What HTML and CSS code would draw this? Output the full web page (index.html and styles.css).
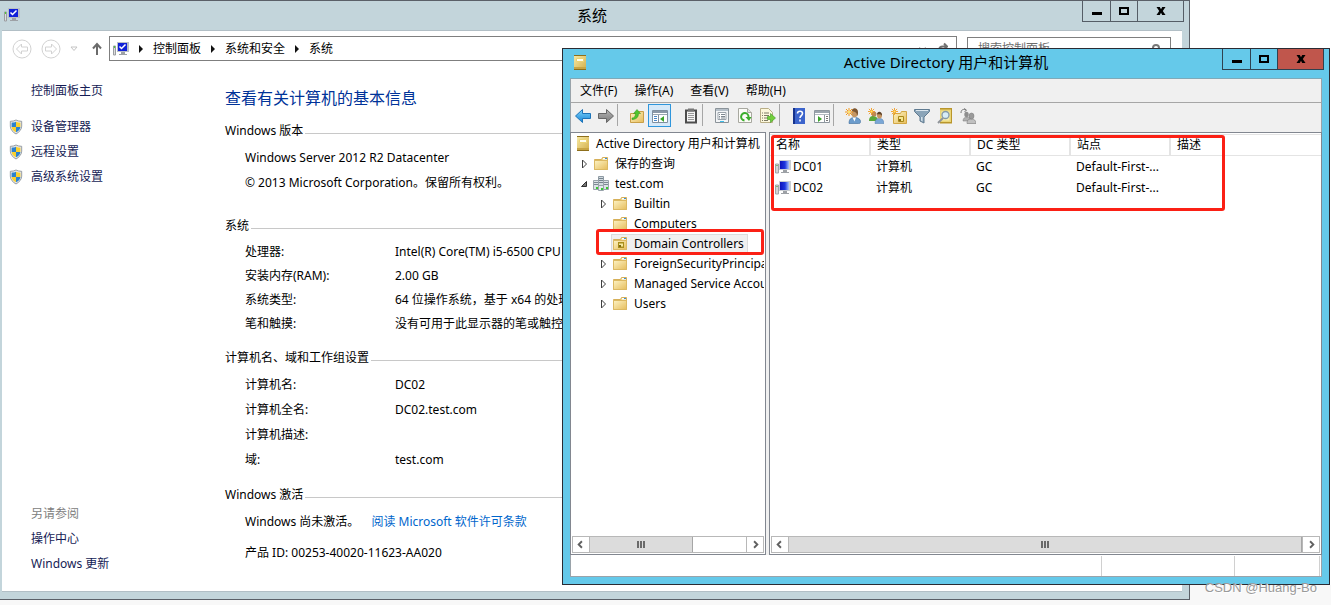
FILE: index.html
```
<!DOCTYPE html>
<html lang="zh-CN">
<head>
<meta charset="utf-8">
<title>Active Directory 用户和计算机</title>
<link rel="stylesheet" href="styles.css">
</head>
<body>
<svg class="defs" aria-hidden="true">
  <defs>
    <linearGradient id="gFolder" x1="0" y1="0" x2="1" y2="1"><stop offset="0" stop-color="#fdf3c4"/><stop offset="1" stop-color="#e6bd5c"/></linearGradient>
    <linearGradient id="gBook" x1="0" y1="0" x2="1" y2="1"><stop offset="0" stop-color="#f6e8a4"/><stop offset="1" stop-color="#d3ae48"/></linearGradient>
    <linearGradient id="gBlue" x1="0" y1="0" x2="0" y2="1"><stop offset="0" stop-color="#7fd4fb"/><stop offset="1" stop-color="#1584d6"/></linearGradient>
    <linearGradient id="gGrey" x1="0" y1="0" x2="0" y2="1"><stop offset="0" stop-color="#b5b5b5"/><stop offset="1" stop-color="#7a7a7a"/></linearGradient>
    <linearGradient id="gScreen" x1="0" y1="0" x2="1" y2="0"><stop offset="0" stop-color="#0c12b8"/><stop offset=".55" stop-color="#1c36e0"/><stop offset="1" stop-color="#a9c4fb"/></linearGradient>
    <symbol id="computer" viewBox="0 0 16 16">
      <path d="M4 1h12v10H4z" fill="#c9cdd2"/><path d="M5 2h9v8H5z" fill="url(#gScreen)"/>
      <path d="M8 11h4v2h2v1H6v-1h2z" fill="#9da1a6"/><path d="M0.500 5h3v9h-3z" fill="#d4d4d4" stroke="#a2a5aa" stroke-width="1"/><path d="M1 6h2v1H1z" fill="#7fbe70"/>
    </symbol>
    <symbol id="system" viewBox="0 0 16 16">
      <path d="M4 1h12v10H4z" fill="#b9bfc6"/><path d="M5 2h9v8H5z" fill="#1020d8"/><path d="M6.500 5.500l2 2 4-4" fill="none" stroke="#fff" stroke-width="1.500"/>
      <path d="M8 11h4v2h2v1H6v-1h2z" fill="#9da1a6"/><path d="M0.500 5h2v9h-2z" fill="#ddd" stroke="#9a9da1"/><path d="M1 5h1v2H1z" fill="#4cc83a"/>
    </symbol>
    <symbol id="shield" viewBox="0 0 16 18">
      <path d="M8 1c2 1 4 1.500 6.500 1.500V8c0 4-3 7-6.500 9C4.500 15 1.500 12 1.500 8V2.500C4 2.500 6 2 8 1z" fill="#e4e6e8" stroke="#8c9298"/>
      <path d="M8 3v6H3V4c2 0 3.500-.3 5-1z" fill="#2a82cf"/><path d="M8 3v6h5V4c-2 0-3.500-.3-5-1z" fill="#f9d02f"/>
      <path d="M3 9h5v6c-3-1.500-5-3.500-5-6z" fill="#f9d02f"/><path d="M13 9H8v6c3-1.500 5-3.500 5-6z" fill="#2a82cf"/>
    </symbol>
    <symbol id="folder" viewBox="0 0 16 16">
      <path d="M1.500 3.500h7l1-2h5v12h-13z" fill="#f2d98c" stroke="#d6b05a"/><path d="M10 2h4v1.500h-4z" fill="#fff"/><path d="M12 2h2v1h-2z" fill="#3b8fd9"/>
      <path d="M1.500 4.500h13v9h-13z" fill="url(#gFolder)" stroke="#dcb962"/>
    </symbol>
    <symbol id="oufolder" viewBox="0 0 16 16">
      <use href="#folder"/><path d="M6 6h6v6H6z" fill="#a98e1c"/><path d="M7 7.500h4v3H7z" fill="#f5e9a0"/><path d="M7 9h2v2H7z" fill="#7e6a10"/>
    </symbol>
    <symbol id="book" viewBox="0 0 16 16">
      <path d="M2 1h12v14H2z" fill="url(#gBook)"/><path d="M2 0h12v1H2zM2 14h12v1H2z" fill="#8e6f1c"/><path d="M2 12h12v2H2z" fill="#c8a545"/><path d="M4.500 3.500h7v3h-7z" fill="#fffef0" stroke="#ecd372"/>
    </symbol>
    <symbol id="domain" viewBox="0 0 16 16">
      <path d="M5.500 .5h5v9h-5z" fill="#d3dbe0" stroke="#8e9aa3"/><path d="M6 2.500h4M6 4.500h4M6 6.500h4" stroke="#75838d"/>
      <path d="M.5 4.500h5v9h-5z" fill="#dbe2e6" stroke="#98a3ab"/><path d="M10.500 4.500h5v9h-5z" fill="#dbe2e6" stroke="#98a3ab"/><path d="M1 6.500h4M1 8.500h4M11 6.500h4M11 8.500h4" stroke="#7c8993"/>
      <path d="M5.500 9.500h5v5h-5z" fill="#e2e8eb" stroke="#98a3ab"/><path d="M3 11h2v2H3zM8 12h2v2H8zM13 11h2v2h-2z" fill="#37c930"/>
    </symbol>
    <symbol id="closed" viewBox="0 0 16 16"><path d="M5.500 4l4 4-4 4z" fill="#fff" stroke="#404040"/></symbol>
    <symbol id="open" viewBox="0 0 16 16"><path d="M9.500 5.500v5h-5z" fill="#777" stroke="#303030"/></symbol>
    <symbol id="spark" viewBox="0 0 8 8"><path d="M4 0v8M0 4h8M1 1l6 6M7 1L1 7" stroke="#f29a1d"/><path d="M3 3h2v2H3z" fill="#ffe76a"/></symbol>
    <symbol id="left" viewBox="0 0 16 16"><path d="M9 4.500L5.500 8 9 11.500" fill="none" stroke="#606060" stroke-width="2"/></symbol>
    <symbol id="right" viewBox="0 0 16 16"><path d="M7 4.500L10.500 8 7 11.500" fill="none" stroke="#606060" stroke-width="2"/></symbol>
    <symbol id="crumb" viewBox="0 0 8 8"><path d="M2 0l4 4-4 4z" fill="#111"/></symbol>
    <symbol id="min" viewBox="0 0 12 12"><path d="M1 7h10v3H1z"/></symbol>
    <symbol id="max" viewBox="0 0 12 12"><path d="M1 2h10v8H1zM3 4v4h6V4z" fill-rule="evenodd"/></symbol>
    <symbol id="close" viewBox="0 0 12 12"><path d="M1.500 2h3.300L6 4.300 7.200 2h3.300L7.800 6l2.700 4H7.200L6 7.700 4.800 10H1.500l2.700-4z"/></symbol>
  </defs>
</svg>

<main class="desktop">
  <section class="window system" aria-label="系统">
    <header class="titlebar">
      <svg class="icon title-icon"><use href="#system"/></svg>
      <h1 class="title">系统</h1>
      <div class="caption">
        <button class="cap" aria-label="最小化"><svg><use href="#min"/></svg></button>
        <button class="cap cap-max" aria-label="最大化"><svg><use href="#max"/></svg></button>
        <button class="cap cap-close" aria-label="关闭"><svg><use href="#close"/></svg></button>
      </div>
    </header>
    <div class="client">
      <nav class="navbar">
        <button class="round" aria-label="后退"><svg viewBox="0 0 20 20"><circle cx="10" cy="10" r="9"/><path d="M4.500 10l5-5v3h6v4h-6v3z"/></svg></button>
        <button class="round" aria-label="前进"><svg viewBox="0 0 20 20"><circle cx="10" cy="10" r="9"/><path d="M15.500 10l-5-5v3h-6v4h6v3z"/></svg></button>
        <button class="history" aria-label="最近浏览的位置"><svg viewBox="0 0 8 6"><path d="M1 1h6L4 4.500z" fill="none" stroke="#c4c4c4"/></svg></button>
        <button class="up" aria-label="向上"><svg viewBox="0 0 12 14"><path d="M6 13V2M2 6.500L6 2l4 4.500" fill="none" stroke="#6b6b6b" stroke-width="2"/></svg></button>
        <div class="address">
          <svg class="icon"><use href="#system"/></svg>
          <svg class="crumb"><use href="#crumb"/></svg><a href="#">控制面板</a>
          <svg class="crumb"><use href="#crumb"/></svg><a href="#">系统和安全</a>
          <svg class="crumb"><use href="#crumb"/></svg><a href="#">系统</a>
          <svg class="address-tools" viewBox="0 0 32 16"><path d="M3 7l3.500 3.500L10 7M31 5.500h-4c-3 0-4 2-4 4 0 3 2 5 5 5M28 2.500l3 3-3 3" fill="none" stroke="#707070" stroke-width="2"/></svg>
        </div>
        <div class="search"><input type="search" placeholder="搜索控制面板" aria-label="搜索控制面板"><svg viewBox="0 0 12 12"><circle cx="6" cy="5" r="3" fill="none" stroke="#777" stroke-width="2"/><path d="M4 7l-3 4" stroke="#777" stroke-width="2"/></svg></div>
      </nav>
      <div class="body">
        <aside class="side">
          <a class="side-home" href="#">控制面板主页</a>
          <a class="side-link" href="#"><svg><use href="#shield"/></svg>设备管理器</a>
          <a class="side-link" href="#"><svg><use href="#shield"/></svg>远程设置</a>
          <a class="side-link" href="#"><svg><use href="#shield"/></svg>高级系统设置</a>
          <div class="see-also"><p>另请参阅</p><a href="#">操作中心</a><a href="#">Windows 更新</a></div>
        </aside>
        <article class="info">
          <h2 class="heading">查看有关计算机的基本信息</h2>
          <h3 class="legend edition">Windows 版本</h3>
          <p class="line">Windows Server 2012 R2 Datacenter</p>
          <p class="line">© 2013 Microsoft Corporation。保留所有权利。</p>
          <h3 class="legend after-edition">系统</h3>
          <dl class="facts compact">
            <dt>处理器:</dt><dd>Intel(R) Core(TM) i5-6500 CPU @ 3.20GHz</dd>
            <dt>安装内存(RAM):</dt><dd>2.00 GB</dd>
            <dt>系统类型:</dt><dd>64 位操作系统，基于 x64 的处理器</dd>
            <dt>笔和触摸:</dt><dd>没有可用于此显示器的笔或触控输入</dd>
          </dl>
          <h3 class="legend">计算机名、域和工作组设置</h3>
          <dl class="facts">
            <dt>计算机名:</dt><dd>DC02</dd>
            <dt>计算机全名:</dt><dd>DC02.test.com</dd>
            <dt>计算机描述:</dt><dd></dd>
            <dt>域:</dt><dd>test.com</dd>
          </dl>
          <h3 class="legend activation-legend">Windows 激活</h3>
          <p class="line activation">Windows 尚未激活。<a href="#">阅读 Microsoft 软件许可条款</a></p>
          <p class="line">产品 ID: 00253-40020-11623-AA020</p>
        </article>
      </div>
    </div>
  </section>

  <section class="window directory" aria-label="Active Directory 用户和计算机">
    <header class="titlebar">
      <svg class="icon title-icon"><use href="#book"/></svg>
      <h1 class="title">Active Directory 用户和计算机</h1>
      <div class="caption">
        <button class="cap" aria-label="最小化"><svg><use href="#min"/></svg></button>
        <button class="cap cap-max" aria-label="最大化"><svg><use href="#max"/></svg></button>
        <button class="cap cap-close" aria-label="关闭"><svg><use href="#close"/></svg></button>
      </div>
    </header>
    <div class="client">
      <nav class="menu"><button>文件(F)</button><button>操作(A)</button><button>查看(V)</button><button>帮助(H)</button></nav>
      <div class="toolbar" role="toolbar">
        <button aria-label="后退"><svg viewBox="0 0 16 16"><path d="M0.500 8l7-6.500v4h8v5h-8v4z" fill="url(#gBlue)" stroke="#1c73b8"/></svg></button>
        <button aria-label="前进"><svg viewBox="0 0 16 16"><path d="M15.500 8l-7-6.500v4h-8v5h8v4z" fill="url(#gGrey)" stroke="#666"/></svg></button>
        <i class="sep"></i>
        <button aria-label="上一级"><svg viewBox="0 0 16 16"><path d="M1.500 5.500h7l1-2h5v11h-13z" fill="url(#gFolder)" stroke="#c99f47"/><path d="M3 10c2.500 0 3.500-2 3.500-4.500H4.500L8 1.500l3.500 4h-2c0 3.500-2 6-6.500 6z" fill="#4fc52c" stroke="#2d8f1b" stroke-width=".5"/></svg></button>
        <button class="pressed" aria-label="显示控制台树"><svg viewBox="0 0 16 16"><path d="M.5 2.500h15v12H.5z" fill="#fff" stroke="#8090a0"/><path d="M1 3h14v2H1z" fill="#8a98a8"/><path d="M1 6h14v1H1z" fill="#9aa6b2"/><path d="M6.500 7v7" stroke="#8090a0"/><path d="M2 8.500h3M2 10.500h3M2 12.500h3" stroke="#4a87c8"/><path d="M12 8v6l-4-3z" fill="#3aa52a"/></svg></button>
        <button class="spaced" aria-label="复制"><svg viewBox="0 0 16 16"><path d="M3 2.500h10v12H3z" fill="#f5f5f5" stroke="#4d4d4d" stroke-width="2"/><path d="M5 .5h6v3H5z" fill="#777"/><path d="M5 5.500h6M5 7.500h6M5 9.500h6M5 11.500h6" stroke="#999"/></svg></button>
        <i class="sep"></i>
        <button aria-label="属性"><svg viewBox="0 0 16 16"><path d="M1.500.5h13v14h-13z" fill="#f3f5f7" stroke="#8b9399"/><path d="M2 1h12v2H2z" fill="#b6c0c9"/><path d="M4 4.500h8v7H4z" fill="#fff" stroke="#9aa3ab"/><path d="M5 6.500h1M7 6.500h4M5 8.500h1M7 8.500h4M5 10h1M7 10h4" stroke="#7d8790"/><path d="M6 13h4v1H6z" fill="#3cbbe8"/></svg></button>
        <button aria-label="刷新"><svg viewBox="0 0 16 16"><path d="M1.500.5h9l4 4v10h-13z" fill="#fcfcf7" stroke="#a8a8a0"/><path d="M10.500.5v4h4" fill="#e2e2dc" stroke="#a8a8a0"/><path d="M7.500 12.500a3.700 3.700 0 1 1 4-3.500" fill="none" stroke="#3bae2c" stroke-width="2"/><path d="M8.500 9h6l-2.500 4z" fill="#3bae2c"/></svg></button>
        <button aria-label="导出列表"><svg viewBox="0 0 16 16"><path d="M.5.5h8l4 4v10H.5z" fill="#fdf8dd" stroke="#b8ad86"/><path d="M2 5h1M4 5h5M2 7.500h1M4 7.500h5M2 10h1M4 10h4M2 12.500h1M4 12.500h4" stroke="#7d7a66"/><path d="M7.500 8.500h3v-3l5 4.500-5 4.500v-3h-3z" fill="#72ce3a" stroke="#3a9a24" stroke-width=".6"/></svg></button>
        <i class="sep"></i>
        <button aria-label="帮助"><svg viewBox="0 0 16 16"><path d="M2 0h12v16H2z" fill="#3c64cc"/><path d="M2 0h2v16H2z" fill="#16328c"/><path d="M6.500 5.500c0-3 5-3 5 0 0 2-2.500 2.300-2.500 4.500M9 11.500v2" fill="none" stroke="#fff" stroke-width="1.600"/></svg></button>
        <button aria-label="操作窗格"><svg viewBox="0 0 16 16"><path d="M.5 2.500h15v12H.5z" fill="#fff" stroke="#8e979f"/><path d="M1 3h14v2H1z" fill="#9ba5ae"/><path d="M1 6h14v1H1z" fill="#b2bac1"/><path d="M10.500 7v7" stroke="#8e979f"/><path d="M4 8v6l4-3z" fill="#3aa52a"/><path d="M12 8.500h2M12 10.500h2M12 12.500h2" stroke="#777"/></svg></button>
        <i class="sep"></i>
        <button aria-label="新建用户"><svg viewBox="0 0 16 16"><path d="M4 15.500c0-4 1.500-6 5.500-6s6 2 6 4-1 2-2 2z" fill="#6c9ccc" stroke="#3d6c9a" stroke-width=".6"/><path d="M7.500 9.500l2 4 1.500-4z" fill="#fff"/><ellipse cx="9.500" cy="5" rx="3.200" ry="4.200" fill="#c59663"/><path d="M7 3c0-4 6.500-4 6 2 0 2-1 3-1 3 0-3-1-4-5-5z" fill="#7c5632"/><use href="#spark" width="8" height="8"/></svg></button>
        <button aria-label="新建组"><svg viewBox="0 0 16 16"><path d="M1 13c0-4 2-5 4-5s5 1 5 5z" fill="#59a83a"/><circle cx="6" cy="6" r="2.500" fill="#b98756"/><path d="M7 15.500c0-4 2-5 4.500-5s4 1 4.500 5z" fill="#7aa7d6" stroke="#4f7dac" stroke-width=".5"/><ellipse cx="11.500" cy="7.500" rx="2.500" ry="3" fill="#c59663"/><path d="M9 6.500c0-4 5.500-3.500 5 1.500-.5-1.500-2-2-5-1.500z" fill="#5c4128"/><use href="#spark" width="7" height="7"/></svg></button>
        <button aria-label="新建组织单位"><svg viewBox="0 0 16 16"><path d="M2.500 5.500h7l1-2h5v12h-13z" fill="url(#gFolder)" stroke="#d3a744"/><path d="M7.500 8.500h5v5h-5z" fill="#f6e690" stroke="#a98719"/><path d="M8 11h2v2H8z" fill="#8b6e12"/><use href="#spark" width="7" height="7"/></svg></button>
        <button aria-label="筛选器"><svg viewBox="0 0 16 16"><path d="M.5 1.500h15v2L10 9v6l-4-2V9L.5 3.500z" fill="#8aa4b8" stroke="#5f7a90"/><path d="M2 2h12v1H2z" fill="#dbe6ee"/><path d="M7 9h1.500v4.500L7 12.500z" fill="#d4e1eb"/></svg></button>
        <button aria-label="查找"><svg viewBox="0 0 16 16"><path d="M3 1h12v14H3z" fill="#ead577"/><path d="M3 0h12v1.500H3zM3 14h12v1.500H3zM14 0h1v15h-1z" fill="#b9962c"/><path d="M4.500 3.500h8v9h-8z" fill="#f7edae"/><circle cx="8.500" cy="7" r="3.500" fill="#d8edf7" stroke="#8499a5" stroke-width="1.300"/><path d="M6 10l-5 5" stroke="#8f9499" stroke-width="2"/></svg></button>
        <button aria-label="添加到组"><svg viewBox="0 0 16 16"><path d="M3 13c0-3 2-4 4-4s4 1 4 4z" fill="#b0b0b0" stroke="#777" stroke-width=".5"/><ellipse cx="6.500" cy="6.500" rx="2.200" ry="2.800" fill="#8e8e8e"/><path d="M7 15.500c0-4 2-4.500 4.500-4.500s4 1 4.500 4.500z" fill="#c0c0c0" stroke="#777" stroke-width=".6"/><ellipse cx="11.500" cy="8" rx="2.500" ry="3" fill="#9a9a9a" stroke="#777" stroke-width=".5"/><path d="M1 5c0-4 3-4 5-3M4 .5L6.500 2 4.500 4" fill="none" stroke="#777"/></svg></button>
      </div>
      <div class="panes">
        <div class="pane tree-pane">
          <ul class="tree">
            <li class="node root"><svg class="icon"><use href="#book"/></svg><span>Active Directory 用户和计算机</span></li>
            <li class="node"><svg class="icon"><use href="#closed"/></svg><svg class="icon"><use href="#folder"/></svg><span>保存的查询</span></li>
            <li class="node"><svg class="icon"><use href="#open"/></svg><svg class="icon"><use href="#domain"/></svg><span>test.com</span></li>
            <li class="node child"><svg class="icon"><use href="#closed"/></svg><svg class="icon"><use href="#folder"/></svg><span>Builtin</span></li>
            <li class="node child"><i class="icon"></i><svg class="icon"><use href="#folder"/></svg><span>Computers</span></li>
            <li class="node child marked"><i class="icon"></i><div class="selected"><svg class="icon"><use href="#oufolder"/></svg><span>Domain Controllers</span></div></li>
            <li class="node child"><svg class="icon"><use href="#closed"/></svg><svg class="icon"><use href="#folder"/></svg><span>ForeignSecurityPrincipals</span></li>
            <li class="node child"><svg class="icon"><use href="#closed"/></svg><svg class="icon"><use href="#folder"/></svg><span>Managed Service Accounts</span></li>
            <li class="node child"><svg class="icon"><use href="#closed"/></svg><svg class="icon"><use href="#folder"/></svg><span>Users</span></li>
          </ul>
          <div class="scroll"><button aria-label="向左"><svg><use href="#left"/></svg></button><div class="track"><div class="thumb part"><i class="grip"></i></div></div><button aria-label="向右"><svg><use href="#right"/></svg></button></div>
        </div>
        <div class="pane list-pane">
          <div class="list">
            <table>
              <thead><tr><th>名称</th><th>类型</th><th>DC 类型</th><th>站点</th><th class="last">描述</th></tr></thead>
              <tbody>
                <tr><td class="name"><svg class="icon"><use href="#computer"/></svg>DC01</td><td>计算机</td><td>GC</td><td>Default-First-...</td><td></td></tr>
                <tr><td class="name"><svg class="icon"><use href="#computer"/></svg>DC02</td><td>计算机</td><td>GC</td><td>Default-First-...</td><td></td></tr>
              </tbody>
            </table>
            <div class="mark"></div>
          </div>
          <div class="scroll"><button aria-label="向左"><svg><use href="#left"/></svg></button><div class="track"><div class="thumb"><i class="grip"></i></div></div><button aria-label="向右"><svg><use href="#right"/></svg></button></div>
        </div>
      </div>
      <footer class="status"><span></span><span></span><span></span></footer>
    </div>
  </section>
  <p class="watermark">CSDN @Huang-Bo</p>
</main>
</body>
</html>
```

FILE: styles.css
```
* { box-sizing: border-box; }
body { margin: 0; font: 12px/20px "Noto Sans", "Noto Sans CJK SC", sans-serif; color: #000; }
h1, h2, h3, p, dl, dd, ul { margin: 0; padding: 0; font-weight: normal; }
button { margin: 0; padding: 0; border: 0; background: none; font: inherit; color: inherit; }
a { color: inherit; text-decoration: none; }
svg { display: block; flex: none; }
.defs { position: absolute; width: 0; height: 0; }
.icon { width: 16px; height: 16px; flex: none; }

.desktop { position: relative; height: 100vh; min-height: 600px; overflow: hidden; background: linear-gradient(to top, #f8f8f8 20px, #fff 20px); }
.window { position: absolute; display: flex; flex-direction: column; }
.titlebar { position: relative; height: 29px; flex: none; }
.title { text-align: center; font-size: 15px; line-height: 28px; }
.title-icon { position: absolute; left: 2px; top: 6px; }
.caption { position: absolute; top: 0; right: -2px; display: flex; border: 1px solid #555d66; border-top: 0; }
.cap { width: 27px; height: 20px; display: grid; place-items: center; }
.cap + .cap { border-left: 1px solid #555d66; }
.cap-close { width: 46px; }
.cap svg { width: 12px; height: 12px; }
.client { flex: 1; min-height: 0; display: flex; flex-direction: column; }

.system { inset: 0 141px 5px 0; padding: 0 7px 7px 2px; background: #c3d5db; border: 1px solid #5b6068; border-left: 0; }
.system .client { background: #fff; border-top: 1px solid #b2bfc6; border-bottom: 1px solid #b2bfc6; }

.navbar { display: flex; align-items: center; height: 35px; padding: 0 11px 0 10px; flex: none; }
.round { margin-right: 9px; }
.round svg { width: 20px; height: 20px; fill: none; stroke: #d2d2d2; }
.history svg { width: 8px; height: 6px; }
.history { margin-right: 13px; }
.up svg { width: 12px; height: 14px; }
.up { margin-right: 6px; }
.address { flex: 1; display: flex; align-items: center; height: 25px; padding: 0 8px 0 3px; border: 1px solid #7f7f7f; }
.crumb { width: 8px; height: 8px; margin: 0 8px; }
.address-tools { width: 32px; height: 16px; margin-left: auto; }
.search { display: flex; align-items: center; width: 204px; height: 24px; margin-left: 10px; padding: 0 8px; border: 1px solid #7f7f7f; }
.search input { flex: 1; min-width: 0; border: 0; padding: 0 2px; font: inherit; outline: 0; }
.search input::placeholder { color: #6d6d6d; opacity: 1; }
.search svg { width: 12px; height: 12px; }

.body { flex: 1; display: grid; grid-template-columns: 223px 1fr; min-height: 0; }
.side { display: flex; flex-direction: column; padding: 12px 0 15px 7px; color: #151c55; line-height: 25px; }
.side-home { margin: 0 0 11px 22px; }
.side-link { display: flex; align-items: center; gap: 8px; }
.side-link svg { width: 14px; height: 18px; }
.see-also { display: flex; flex-direction: column; margin: auto 0 0 22px; }
.see-also p { color: #808080; }
.info { padding-top: 20px; }
.heading { font-size: 16px; line-height: 24px; color: #003399; }
.legend { display: flex; align-items: center; gap: 2px; margin: 12px 0 4px; font-size: 12px; line-height: 20px; }
.legend::after { content: ""; flex: 1; height: 1px; margin-top: 4px; background: #c8c8c8; }
.edition { margin-top: 11px; }
.after-edition { margin-top: 21px; }
.activation-legend { margin-top: 13px; }
.line { padding-left: 20px; line-height: 25px; white-space: nowrap; }
.activation { display: flex; gap: 12px; margin-bottom: 6px; }
.activation a { color: #0066cc; }
.facts { display: grid; grid-template-columns: 150px 1fr; grid-auto-rows: 25px; padding-left: 20px; line-height: 25px; white-space: nowrap; }
.compact { grid-auto-rows: 24px; line-height: 24px; }

.directory { inset: 48px 1px 20px 562px; padding: 0 7px 7px; background: #65c9ea; border: 1px solid #2b2b33; }
.directory .title { line-height: 26px; }
.directory .caption, .directory .cap + .cap { border-color: #2f4250; }
.directory .cap-close { background: #c0564c; }
.directory .client { background: #f0f0f0; border: 1px solid #9aa3aa; border-top-color: #7fa9b8; }
.menu { display: flex; gap: 1px; height: 24px; padding-left: 1px; border-bottom: 1px solid #a6a6a6; flex: none; }
.menu button { padding: 0 8px; }
.toolbar { display: flex; height: 29px; padding: 1px 0 0; flex: none; }
.toolbar button { width: 23px; height: 23px; display: grid; place-items: center; }
.toolbar svg { width: 16px; height: 16px; }
.toolbar .pressed { background: #d6e9f9; border: 1px solid #2f96dc; }
.toolbar .spaced { margin-left: 8px; }
.sep { width: 1px; height: 22px; margin-right: 7px; background: #a6a6a6; }
.panes { flex: 1; min-height: 0; display: grid; grid-template-columns: 196px 1fr; gap: 3px; margin: 0 -1px; }
.pane { min-width: 0; display: flex; flex-direction: column; background: #fff; border: 1px solid #828790; }
.tree { flex: 1; margin-right: 1px; padding-top: 1px; overflow: hidden; list-style: none; }
.node { display: flex; align-items: center; height: 20px; padding-left: 6px; white-space: nowrap; }
.node span { margin-left: 6px; }
.root { padding-left: 4px; }
.root span { margin-left: 5px; }
.child { padding-left: 25px; }
.marked { position: relative; }
.marked::after, .mark { content: ""; position: absolute; border: 3px solid #fb2015; border-radius: 3px; }
.marked::after { inset: -5px 0 -1px 25px; }
.selected { display: flex; align-items: center; height: 18px; padding-right: 3px; background: #f0f0f0; box-shadow: 0 0 0 1px #dcdcdc; }
.list { flex: 1; position: relative; padding: 1px 0 0; }
.mark { inset: 2px 96px auto 1px; height: 76px; }
table { border-collapse: collapse; table-layout: fixed; width: 100%; line-height: 20px; }
th, td { width: 100px; height: 21px; padding: 0 0 0 6px; text-align: left; font-weight: normal; white-space: nowrap; }
th { border: solid #e4e4e4; border-width: 1px 2px 1px 0; }
th.last { border-right: 0; }
th:last-child, td:last-child { width: auto; }
.name { display: flex; align-items: center; gap: 2px; padding-left: 5px; }
.scroll { display: flex; height: 17px; margin: 0 1px 1px; border: 1px solid #b8b8b8; flex: none; }
.scroll button { width: 16px; height: 15px; }
.scroll svg { width: 16px; height: 15px; }
.track { flex: 1; border: solid #b8b8b8; border-width: 0 1px; }
.thumb { height: 15px; display: grid; place-items: center; background: #dcdcdc; border-right: 1px solid #a6a6a6; }
.part { width: 66%; }
.grip { width: 8px; height: 7px; background: repeating-linear-gradient(to right, #6a6a6a 0 2px, #dcdcdc 2px 3px); }
.status { display: grid; grid-template-columns: 1fr 133px 85px; height: 21px; padding: 1px 1px 0 0; background: #fff; flex: none; }
.status span { border-right: 1px solid #d0d0d0; }
.watermark { position: absolute; right: 14px; bottom: 7px; font: 13px/20px "Liberation Sans", sans-serif; color: #9a9a9a; text-shadow: 1px 1px 0 #fff; }
```
